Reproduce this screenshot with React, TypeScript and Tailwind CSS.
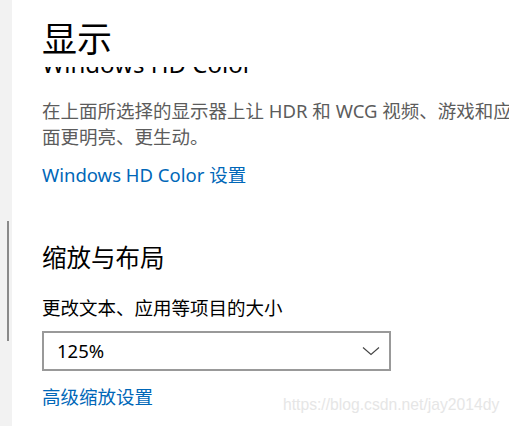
const font = { fontFamily: '"Noto Sans", "Noto Sans CJK SC", sans-serif' }

export default function App() {
  return (
    <div className="relative flex h-[426px] w-[509px] overflow-hidden bg-white" style={font}>
      {/* left rail with scrollbar thumb */}
      <div className="w-[12px] shrink-0 bg-[#f2f2f2] pt-[221px] pl-[7px]">
        <div className="h-[120px] w-[2px] bg-[#8a8a8a]" />
      </div>

      <div className="flex min-w-0 flex-1 flex-col pl-[30px]">
        {/* page header */}
        <div className="h-[67px] shrink-0">
          <h1 className="mt-[19px] text-[35px] leading-[40px] text-black whitespace-nowrap">显示</h1>
        </div>

        {/* scrolled content, clipped under the header */}
        <div className="flex-1 overflow-hidden">
          <div className="-mt-[17px]">
            <h2 className="text-[24px] leading-[28px] text-black whitespace-nowrap">Windows HD Color</h2>
            <p className="mt-[20px] text-[18.5px] leading-[26px] text-[#5c5c5c] whitespace-nowrap">
              在上面所选择的显示器上让 HDR 和 WCG 视频、游戏和应用中的画
              <br />
              面更明亮、更生动。
            </p>
            <a className="mt-[12px] block text-[18.5px] leading-[26px] text-[#0067b8] whitespace-nowrap">
              Windows HD Color 设置
            </a>

            <h2 className="mt-[54px] text-[24.5px] leading-[32px] text-black whitespace-nowrap">缩放与布局</h2>
            <div className="mt-[21px] text-[18.5px] leading-[26px] text-black whitespace-nowrap">
              更改文本、应用等项目的大小
            </div>
            <div className="mt-[10px] flex h-[40px] w-[349px] items-center justify-between border-2 border-[#999999] pl-[13px] pr-[9px]">
              <span className="text-[18.5px] text-black">125%</span>
              <svg width="18" height="10" viewBox="0 0 18 10" fill="none">
                <path d="M1 1.5 L9 8.5 L17 1.5" stroke="#444" strokeWidth="1.1" />
              </svg>
            </div>
            <a className="mt-[13px] block text-[18.5px] leading-[26px] text-[#0067b8] whitespace-nowrap">
              高级缩放设置
            </a>
          </div>
        </div>
      </div>

      {/* watermark */}
      <div
        className="absolute left-[283px] top-[395px] text-[15.7px] leading-[20px] text-[#e6e6e6] whitespace-nowrap"
        style={{ fontFamily: '"Liberation Sans", Arial, sans-serif' }}
      >
        https://blog.csdn.net/jay2014dy
      </div>
    </div>
  )
}
